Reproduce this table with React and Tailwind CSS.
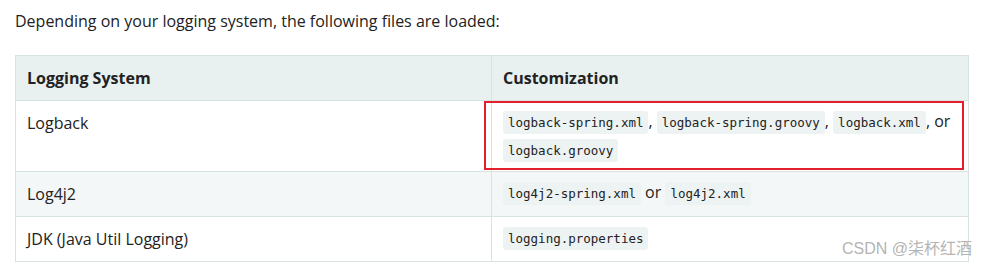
import React from 'react';

const rows = [
    {
        system: 'Logback',
        files: ['logback-spring.xml', 'logback-spring.groovy', 'logback.xml', 'logback.groovy'],
        highlight: true,
    },
    { system: 'Log4j2', files: ['log4j2-spring.xml', 'log4j2.xml'] },
    { system: 'JDK (Java Util Logging)', files: ['logging.properties'] },
];

function Code({ children }) {
    return (
        <code className="rounded-[3px] bg-[#edf2f2] px-[5px] py-[4px] font-['DejaVu_Sans_Mono',monospace] text-[12.5px] text-[#222]">
            {children}
        </code>
    );
}

function FileList({ files }) {
    // "a, b, c, or d" / "a or b"
    return files.map((f, i) => {
        let sep = null;
        if (i < files.length - 1) {
            if (files.length === 2) sep = ' or ';
            else if (i === files.length - 2) sep = ', or ';
            else sep = ', ';
        }
        return (
            <React.Fragment key={f}>
                <Code>{f}</Code>
                {sep}
            </React.Fragment>
        );
    });
}

export default function App() {
    return (
        <div className="relative h-[267px] w-[988px] bg-white font-['Open_Sans',sans-serif] text-[16px] text-[#222]">
            <p className="px-[15px] pt-[9px] leading-[24px]">
                Depending on your logging system, the following files are loaded:
            </p>

            <table className="ml-[15px] mt-[22px] w-[954px] border-collapse">
                <thead>
                    <tr className="bg-[#e9f1f0]">
                        <th className="w-[476px] border border-[#d8e2e1] px-[11px] py-[10px] text-left font-bold leading-[24px]">
                            Logging System
                        </th>
                        <th className="border border-[#d8e2e1] px-[11px] py-[10px] text-left font-bold leading-[24px]">
                            Customization
                        </th>
                    </tr>
                </thead>
                <tbody>
                    {rows.map((row, i) => (
                        <tr key={row.system} className={i % 2 === 1 ? 'bg-[#f4f7f7]' : 'bg-white'}>
                            <td className="border border-[#d8e2e1] px-[11px] py-[9px] align-top leading-[26px]">
                                {row.system}
                            </td>
                            <td className="relative border border-[#d8e2e1] px-[11px] py-[7px] align-top leading-[27px]">
                                <FileList files={row.files} />
                                {row.highlight && (
                                    <div className="pointer-events-none absolute bottom-[1px] left-[-8px] right-[4px] top-[0px] border-2 border-[#e3202a]" />
                                )}
                            </td>
                        </tr>
                    ))}
                </tbody>
            </table>

            <div className="absolute right-[16px] top-[237px] font-['Liberation_Sans','Noto_Sans_CJK_SC',sans-serif] text-[16px] text-[#b4b4b4]">
                CSDN @柒杯红酒
            </div>
        </div>
    );
}
